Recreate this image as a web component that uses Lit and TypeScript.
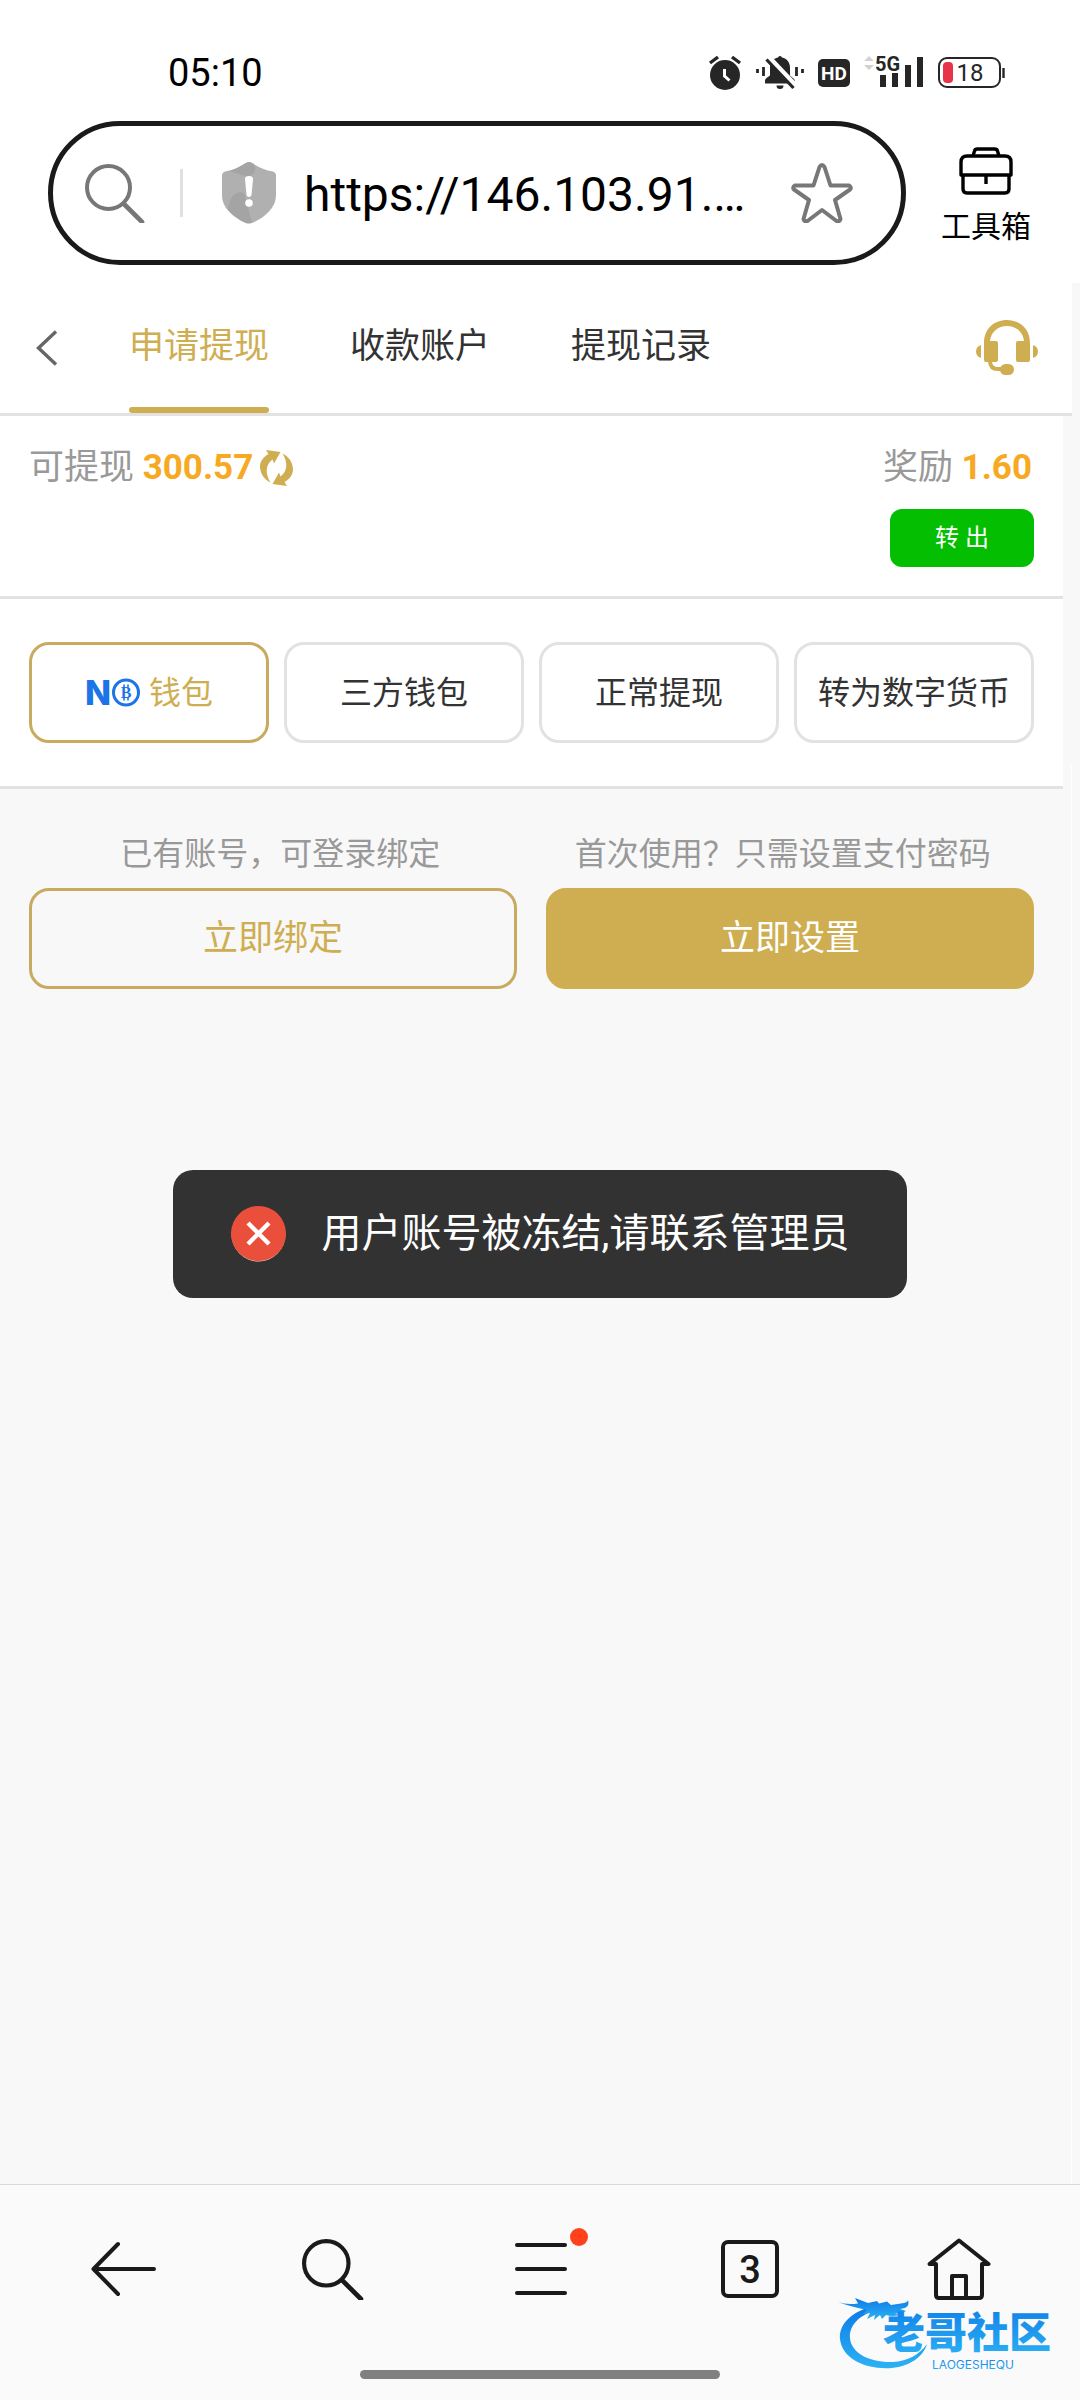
import { LitElement, html, css, svg } from "lit";
import { customElement, state } from "lit/decorators.js";
import { classMap } from "lit/directives/class-map.js";

const alarmIcon = html`<svg width="34" height="36" viewBox="0 0 34 36" aria-hidden="true">
  <circle cx="17" cy="20" r="15" fill="#262626" />
  <path d="M2 8l8-6M32 8l-8-6" stroke="#262626" stroke-width="3.4" fill="none" />
  <path d="M16.500 14v7l5 4.500" stroke="#fff" stroke-width="3" fill="none" />
</svg>`;

const mutedBellIcon = html`<svg width="48" height="36" viewBox="0 0 48 36" aria-hidden="true">
  <path d="M24 1a2 2 0 0 1 2 1.500c5 1 8 5 8 10v8l4 3.500q1 1 1 3v1.500H9v-3q0-1.500 1.500-2.500l3.500-2.500v-8c0-5 3-9 8-10a2 2 0 0 1 2-1.500z" fill="#262626" />
  <path d="M20.500 30.500h7a3.500 3.500 0 0 1-7 0z" fill="#262626" />
  <path d="M13 2.500L40 31" stroke="#fff" stroke-width="5" />
  <path d="M10.500 4.500L37.500 33" stroke="#262626" stroke-width="3.200" />
  <path d="M1.500 14v4M7.500 12v9M40.500 12v9M46.500 14v4" stroke="#262626" stroke-width="2.800" />
</svg>`;

const hdIcon = html`<svg width="32" height="36" viewBox="0 0 32 36" role="img" aria-label="HD">
  <rect y="4" width="32" height="28" rx="5" fill="#262626" />
  <text x="16" y="25" text-anchor="middle" font-size="19" font-weight="700" font-family="Roboto, sans-serif" fill="#fff">HD</text>
</svg>`;

const signalIcon = html`<svg width="60" height="46" viewBox="0 -5 60 46" role="img" aria-label="5G">
  <path d="M0 6l5-5 5 5zM0 10h10l-5 5z" fill="#d2d2d2" />
  <path d="M16 20h6v12h-6zM28 18h6v14h-6zM41 10h6v22h-6zM53 2h6v30h-6z" fill="#262626" />
  <text x="11" y="16" font-size="20" font-weight="700" font-family="Roboto, sans-serif" fill="#262626">5G</text>
</svg>`;

const batteryIcon = html`<svg width="68" height="36" viewBox="0 0 68 36" role="img" aria-label="18%">
  <rect x="1" y="3" width="61" height="29" rx="8" fill="none" stroke="#262626" stroke-width="2" />
  <path d="M65.500 13v10" stroke="#262626" stroke-width="2.400" />
  <rect x="5" y="7" width="10" height="21" rx="4" fill="#e8344a" />
  <text x="32" y="26" text-anchor="middle" font-size="24" font-family="Roboto, sans-serif" fill="#262626">18</text>
</svg>`;

const lens = (size: number) => html`<svg width=${size} height=${size} viewBox="0 0 60 60" fill="none" stroke="currentColor" stroke-width="4" stroke-linecap="round" aria-hidden="true">
  <circle cx="23.500" cy="24.500" r="21.500" />
  <path d="M39 41l18 18" stroke-width="4.600" />
</svg>`;

const shieldIcon = html`<svg width="54" height="62" viewBox="0 0 54 62" aria-hidden="true">
  <path d="M27 0q2 0 4 1.500 9 6 20 8 3 1 3 4v20C54 46 42 56 30 61q-3 1-6 0C12 56 0 46 0 33.500v-20q0-3 3-4 11-2 20-8Q25 0 27 0z" fill="#b0b0b0" />
  <path d="M27 0q2 0 4 1.500 3 3 2 7-1 4-5 5-6 1-10-1-5-2-10-3.500 8-2.500 15-7.500Q25 0 27 0zM7 42c2-8 8-14 15-11l4 14 4 15q-3 2-6 1C17 58 10 52 5.500 47q0-3 1.500-5z" fill="#a4a4a4" />
  <path d="M23 17q0-3 4-3t4 3l-1.500 16q-.5 2-2.500 2t-2.500-2z" fill="#fff" />
  <circle cx="27" cy="41" r="3.800" fill="#fff" />
</svg>`;

const starIcon = html`<svg width="62" height="60" viewBox="0 0 62 60" fill="none" stroke="#777" stroke-width="4" stroke-linejoin="round" aria-hidden="true">
  <path d="M28.500 4q2.500-4 5 0l6 18.500H58q3 2 1 4L44 37l5.500 19q-1 3-4 2L31 47 16.500 58q-3 1-4-2L18 37 3 26.500q-2-2 1-4h18.500z" />
</svg>`;

const toolboxIcon = html`<svg width="54" height="48" viewBox="0 0 54 48" fill="none" stroke="#000" stroke-width="3.400" stroke-linejoin="round" aria-hidden="true">
  <path d="M14 9l1.500-5q.5-2 3-2h17q2.500 0 3 2L40 9" />
  <path d="M2 28V15q0-6 6-6h38q6 0 6 6v13z" />
  <path d="M4 28v14q0 4 4 4h38q4 0 4-4V28M27 28v9" />
</svg>`;

const chevronIcon = html`<svg width="22" height="36" viewBox="0 0 22 36" fill="none" stroke="#666" stroke-width="3.400" aria-hidden="true">
  <path d="M20 1.500L2.500 18 20 34.500" />
</svg>`;

const headsetIcon = html`<svg width="62" height="56" viewBox="0 0 62 56" fill="#cfae52" aria-hidden="true">
  <path d="M8 23C8 9 18 0 31 0s23 9 23 23v17q0 2-2 2H42q-2 0-2-2V23q0-2 2-2h6C47 12 40 6 31 6S15 12 14 21h6q2 0 2 2v17q0 2-2 2H10q-2 0-2-2z" />
  <path d="M5 25v13C2 37 0 35 0 31.500S2 26 5 25zM57 25v13c3-1 5-3 5-6.500S60 26 57 25z" />
  <path d="M14 41c0 6 3 8 8 8h4" fill="none" stroke="#cfae52" stroke-width="4" />
  <rect x="24" y="44" width="14" height="11" rx="5.500" />
</svg>`;

const arrowHalf = svg`<path d="M6 0L20.500 2 14 13.500 12.500 9.500C6 14 4.500 23 10.500 32.500 3 29 0 22 0 16.500 0 11 4 6.500 8.500 4z" />`;

const refreshIcon = html`<svg width="33" height="36" viewBox="0 0 33 36" fill="#cfae52" aria-hidden="true">
  ${arrowHalf}
  <g transform="rotate(180 16.500 18)">${arrowHalf}</g>
</svg>`;

const noLogo = html`<svg width="59" height="46" viewBox="-3 -8 59 46" role="img" aria-label="NO">
  <text x="-3" y="27" font-size="34" font-weight="800" font-family="Inter, sans-serif" fill="#1b74e8">N</text>
  <circle cx="38" cy="14.500" r="12.500" fill="none" stroke="#1b74e8" stroke-width="3" />
  <text x="38" y="20" text-anchor="middle" font-size="16" font-weight="700" font-family="'Liberation Serif', serif" fill="#1b74e8">B</text>
  <path d="M36 6.500v3M40 6.500v3M36 19.500v3M40 19.500v3" stroke="#1b74e8" stroke-width="1.600" />
</svg>`;

const errorIcon = html`<svg width="55" height="56" viewBox="0 0 55 56" aria-hidden="true">
  <circle cx="27.500" cy="28.500" r="27" fill="#f0d5cf" />
  <circle cx="27.500" cy="27.500" r="27.500" fill="#ea4f3c" />
  <path d="M17 17l21 21M38 17L17 38" stroke="#fff" stroke-width="4.400" />
</svg>`;

const backIcon = html`<svg width="66" height="60" viewBox="0 0 66 60" fill="none" stroke="currentColor" stroke-width="4" stroke-linecap="round" stroke-linejoin="round" aria-hidden="true">
  <path d="M27 5L2.500 30 27 55M3 30h60" />
</svg>`;

const menuIcon = html`<svg width="52" height="54" viewBox="0 0 52 54" fill="none" stroke="currentColor" stroke-width="4" stroke-linecap="round" aria-hidden="true">
  <path d="M2 3h48M2 27h48M2 51h48" />
</svg>`;

const homeIcon = html`<svg width="64" height="62" viewBox="0 0 64 62" fill="none" stroke="currentColor" stroke-width="4" stroke-linejoin="round" stroke-linecap="round" aria-hidden="true">
  <path d="M9 26H2.500L32 2.500 61.500 26H55v31q0 3-3 3H12q-3 0-3-3zM25 60V38h14v22" />
</svg>`;

const communityLogo = html`<svg width="226" height="80" viewBox="0 0 226 80" role="img" aria-label="老哥社区">
  <defs>
    <linearGradient id="blue" x1="0" y1="0" x2="0" y2="1">
      <stop offset="0" stop-color="#0d7be6" />
      <stop offset="1" stop-color="#2db2f5" />
    </linearGradient>
  </defs>
  <g fill="url(#blue)">
    <path d="M32 13C12 19 1 31 2 45c2 20 26 31 52 29 18-2 31-11 35-24-8 11-19 17-34 18-23 1-42-9-43-24C11 32 20 22 36 17z" />
    <path d="M0 8q8 3 20 1.500l-3-5.500 13 5 9-2 2 2.500 8-2 4 3.500 13-2q4-1 4-3 2 5-3 8l-5 1 6 2q-4 3-11 2l4 2q-7 2-13 0l-4 4-2-4-6 5 1-5-8 4 3-6-7 1 4-4Q10 12 0 8z" />
  </g>
  <g fill="url(#blue)">
    <text x="45" y="54" font-size="42" font-weight="900" font-family="'Noto Sans CJK SC', sans-serif">老哥社区</text>
    <text x="94" y="75" font-size="12" font-family="Inter, sans-serif">LAOGESHEQU</text>
  </g>
</svg>`;

@customElement("app-root")
export class AppRoot extends LitElement {
  @state() private tab = 0;
  @state() private method = 0;

  static styles = css`
    :host {
      display: flex;
      flex-direction: column;
      min-height: 100vh;
      background: #fff;
      color: #333;
      font-family: Roboto, "Noto Sans CJK SC", sans-serif;
      font-size: 35px;
      line-height: 40px;
      --gold: #cfae52;
      --line: #e2e2e2;
    }
    * {
      box-sizing: border-box;
    }
    svg {
      display: block;
      flex: none;
    }
    button,
    input {
      margin: 0;
      padding: 0;
      border: 0;
      background: none;
      color: inherit;
      font: inherit;
    }
    .status {
      display: flex;
      align-items: center;
      justify-content: space-between;
      padding: 50px 74px 25px 168px;
      line-height: 46px;
      font-size: 38px;
      color: #000;
    }
    .status-icons {
      display: flex;
      align-items: center;
      gap: 14px;
    }
    .address {
      display: flex;
      align-items: center;
      padding: 0 42px 18px 48px;
      gap: 28px;
    }
    .pill {
      flex: 1;
      min-width: 0;
      height: 144px;
      display: flex;
      align-items: center;
      padding: 0 48px 0 32px;
      border: 5px solid #1a1a1a;
      border-radius: 72px;
      color: #777;
    }
    .separator {
      width: 3px;
      height: 48px;
      margin: 0 39px 0 35px;
      background: #e0e0e0;
    }
    .url {
      flex: 1;
      min-width: 0;
      margin-left: 28px;
      padding-top: 3px;
      color: #000;
      font-size: 48px;
      line-height: 60px;
      outline: none;
      text-overflow: ellipsis;
    }
    .toolbox {
      flex: none;
      display: flex;
      flex-direction: column;
      align-items: center;
      gap: 12px;
      width: 104px;
      padding-top: 7px;
      font-size: 30px;
      color: #000;
    }
    main {
      position: relative;
      flex: 1;
      background: linear-gradient(#fff, #fff) right 8px top 482px / 1px 100% no-repeat #f8f8f8;
    }
    .tabs {
      display: flex;
      align-items: stretch;
      height: 133px;
      margin-right: 8px;
      padding: 0 34px 0 36px;
      border-bottom: 3px solid var(--line);
      background: #fff;
    }
    .back {
      margin-right: 71px;
    }
    .tab-list {
      flex: 1;
      display: flex;
      gap: 81px;
    }
    .tab {
      display: flex;
      flex-direction: column;
      padding-top: 4px;
    }
    .tab-label {
      flex: 1;
      display: flex;
      align-items: center;
    }
    .tab-bar {
      height: 6px;
      border-radius: 3px;
    }
    .tab.on {
      color: var(--gold);
    }
    .tab.on .tab-bar {
      background: var(--gold);
    }
    .section {
      margin-right: 17px;
      padding: 0 29px;
      border-bottom: 3px solid var(--line);
      background: #fff;
    }
    .balance {
      display: flex;
      justify-content: space-between;
      align-items: flex-start;
      padding-top: 32px;
      padding-bottom: 29px;
      color: #999;
    }
    .sum {
      display: flex;
      align-items: center;
      gap: 7px;
    }
    .amount {
      color: #f7a922;
      font-weight: 700;
    }
    .bonus {
      display: flex;
      flex-direction: column;
      align-items: flex-end;
      gap: 21px;
    }
    .bonus-sum {
      padding-right: 2px;
    }
    .transfer {
      width: 144px;
      height: 58px;
      border-radius: 12px;
      background: #04be02;
      color: #fff;
      font-size: 24px;
    }
    .methods {
      display: grid;
      grid-template-columns: repeat(4, 1fr);
      gap: 15px;
      padding-top: 43px;
      padding-bottom: 43px;
    }
    .method {
      display: flex;
      align-items: center;
      justify-content: center;
      gap: 5px;
      height: 101px;
      border: 3px solid var(--line);
      border-radius: 20px;
      font-size: 32px;
      white-space: nowrap;
    }
    .method.on {
      border-color: #c8ab60;
      color: var(--gold);
    }
    .setup {
      margin-right: 17px;
      padding: 45px 29px;
    }
    .hints,
    .actions {
      display: grid;
      grid-template-columns: 1fr 1fr;
    }
    .hints {
      margin-bottom: 14px;
      color: #999;
      font-size: 32px;
      text-align: center;
      white-space: nowrap;
    }
    .actions {
      gap: 29px;
    }
    .action {
      height: 101px;
      border: 3px solid #c8ab60;
      border-radius: 20px;
      color: var(--gold);
    }
    .action.solid {
      border-color: var(--gold);
      background: var(--gold);
      color: #fff;
    }
    .toast {
      position: absolute;
      inset: 0;
      width: fit-content;
      height: fit-content;
      margin: auto;
      display: flex;
      align-items: center;
      gap: 36px;
      padding: 36px 58px;
      border-radius: 20px;
      background: #323232;
      color: #fff;
      font-size: 40px;
      line-height: 55px;
      white-space: nowrap;
    }
    .bottom {
      position: relative;
      display: flex;
      flex-direction: column;
      align-items: center;
      border-top: 1px solid #d8d8d8;
      background: #fafafa;
      color: #1a1a1a;
    }
    .nav {
      align-self: stretch;
      display: grid;
      grid-template-columns: repeat(5, 1fr);
      padding: 44px 17px 61px 20px;
    }
    .nav-item {
      position: relative;
      display: flex;
      align-items: center;
      justify-content: center;
      height: 80px;
    }
    .count {
      width: 58px;
      height: 58px;
      border: 4px solid #1a1a1a;
      border-radius: 7px;
      font-size: 38px;
      line-height: 52px;
      font-weight: 500;
      text-align: center;
    }
    .dot {
      position: absolute;
      top: -1px;
      left: calc(50% + 29px);
      width: 18px;
      height: 18px;
      border-radius: 50%;
      background: #ff421c;
    }
    .handle {
      width: 360px;
      height: 9px;
      margin-bottom: 21px;
      border-radius: 5px;
      background: #808080;
    }
    .mark {
      position: absolute;
      right: 16px;
      bottom: 26px;
    }
  `;

  private tabNames = ["申请提现", "收款账户", "提现记录"];
  private methods = ["钱包", "三方钱包", "正常提现", "转为数字货币"];

  render() {
    return html`
      <div class="status">
        <span>05:10</span>
        <div class="status-icons">${alarmIcon}${mutedBellIcon}${hdIcon}${signalIcon}${batteryIcon}</div>
      </div>
      <div class="address">
        <div class="pill">
          ${lens(60)}
          <span class="separator"></span>
          ${shieldIcon}
          <input class="url" type="text" aria-label="网址" value="https://146.103.91.…" />
          <button aria-label="收藏">${starIcon}</button>
        </div>
        <button class="toolbox">${toolboxIcon}<span>工具箱</span></button>
      </div>
      <main>
        <header class="tabs">
          <button class="back" aria-label="返回">${chevronIcon}</button>
          <nav class="tab-list">
            ${this.tabNames.map(
              (name, i) => html`<button class=${classMap({ tab: true, on: i === this.tab })} @click=${() => (this.tab = i)}>
                <span class="tab-label">${name}</span><span class="tab-bar"></span>
              </button>`
            )}
          </nav>
          <button aria-label="客服">${headsetIcon}</button>
        </header>
        <section class="section balance">
          <div class="sum">
            <span>可提现 <span class="amount">300.57</span></span>
            <button aria-label="刷新">${refreshIcon}</button>
          </div>
          <div class="bonus">
            <span class="bonus-sum">奖励 <span class="amount">1.60</span></span>
            <button class="transfer">转 出</button>
          </div>
        </section>
        <section class="section methods">
          ${this.methods.map(
            (name, i) => html`<button class=${classMap({ method: true, on: i === this.method })} @click=${() => (this.method = i)}>
              ${i === 0 ? noLogo : ""}<span>${name}</span>
            </button>`
          )}
        </section>
        <section class="setup">
          <div class="hints"><span>已有账号，可登录绑定</span><span>首次使用？只需设置支付密码</span></div>
          <div class="actions">
            <button class="action">立即绑定</button>
            <button class="action solid">立即设置</button>
          </div>
        </section>
        <div class="toast" role="alert">${errorIcon}<span>用户账号被冻结,请联系管理员</span></div>
      </main>
      <footer class="bottom">
        <nav class="nav">
          <button class="nav-item" aria-label="后退">${backIcon}</button>
          <button class="nav-item" aria-label="搜索">${lens(62)}</button>
          <button class="nav-item" aria-label="菜单">${menuIcon}<span class="dot"></span></button>
          <button class="nav-item" aria-label="标签页"><span class="count">3</span></button>
          <button class="nav-item" aria-label="主页">${homeIcon}</button>
        </nav>
        <div class="handle"></div>
        <div class="mark">${communityLogo}</div>
      </footer>
    `;
  }
}
